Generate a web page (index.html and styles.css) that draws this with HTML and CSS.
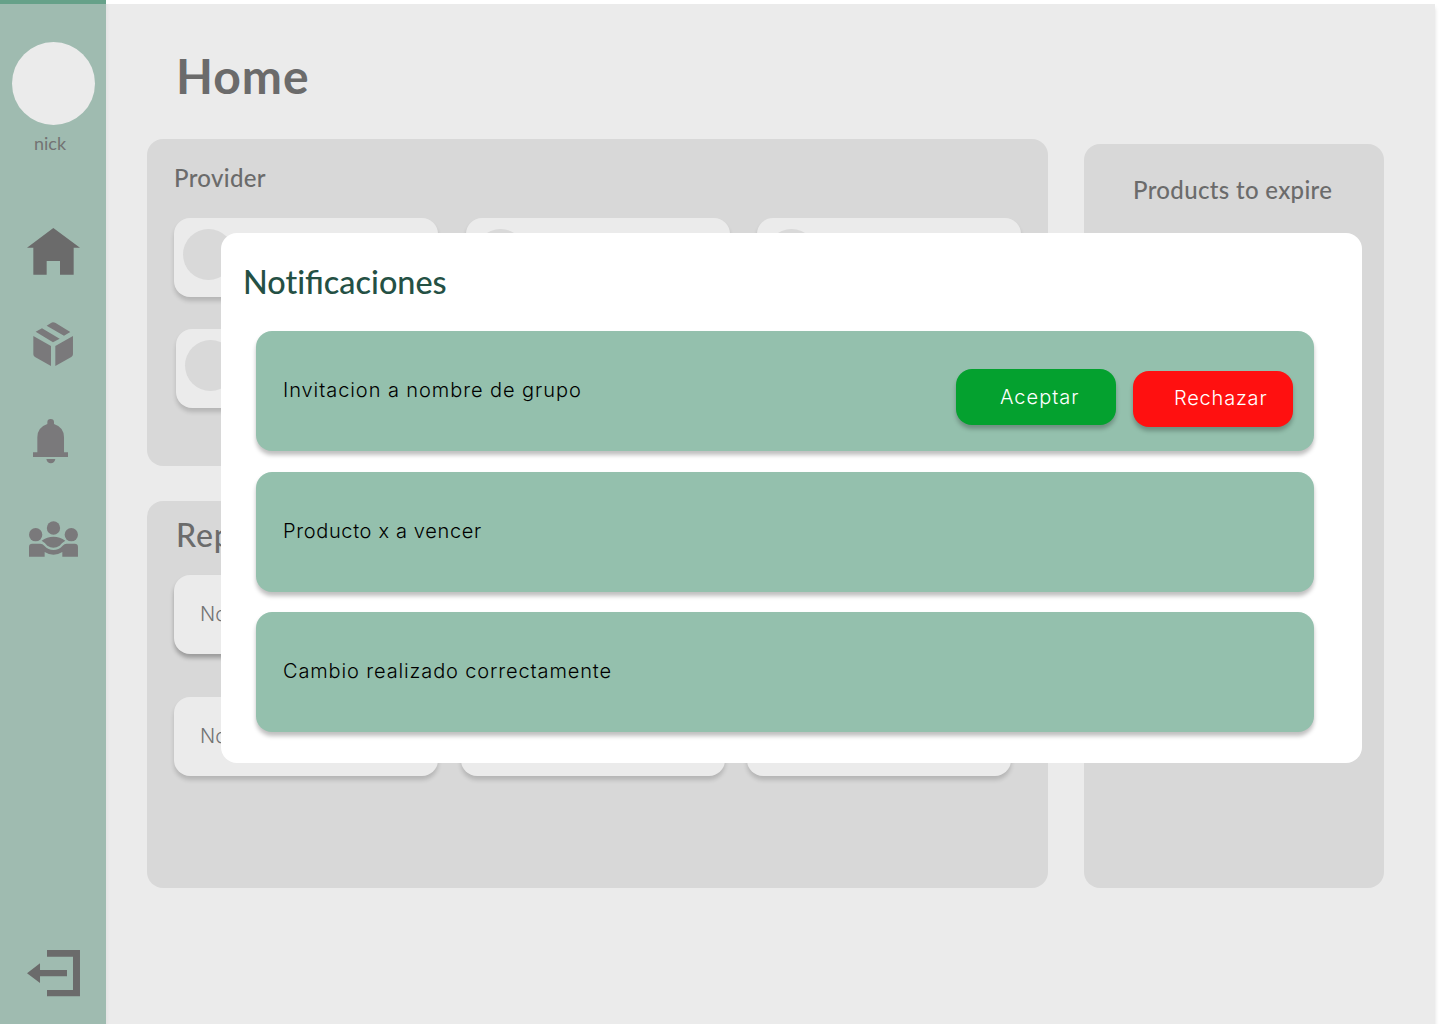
FILE: index.html
```html
<!DOCTYPE html>
<html lang="es">
<head>
<meta charset="utf-8">
<title>Home</title>
<link rel="stylesheet" href="styles.css">
</head>
<body>
<aside class="sidebar">
  <div class="avatar"></div>
  <span class="nick">nick</span>
  <nav class="nav">
    <svg class="icon home" viewBox="81 54 159 140"><path d="M160 54L240 113H221V194H180V153H140V194H100V113H81Z"/></svg>
    <svg class="icon box" viewBox="100 335 121 133"><path d="M160 336q-3 0-6 2L141 346L193 376L212 365L168 338q-4-2-8-2ZM127 354L108 364L160 396L180 385ZM101 377L154 407V467L106 440Q101 437 101 432ZM220 377L167 407V467L215 440Q220 437 220 432Z"/></svg>
    <svg class="icon bell" viewBox="98 57 107 134"><path d="M141 72V67a10 10 0 0 1 20 0V72Q191 82 191 112V157H204V171H98V157H111V112Q111 82 141 72ZM138 177H165Q162 190 151.500 190T138 177Z"/></svg>
    <svg class="icon people" viewBox="87 361 148 108"><circle cx="107" cy="402" r="20"/><circle cx="160.500" cy="382" r="20"/><circle cx="214" cy="402" r="20"/><path d="M125 420Q141 408 160.500 408T196 420Q187 425 179 435Q160 447 142 435Q134 425 125 420ZM87 468V439Q87 429 97 429H121Q128 429 133 435Q145 448 160.500 448T188 435Q193 429 200 429H224Q234 429 234 439V468H187V454Q175 462 160.500 462T134 454V468Z"/></svg>
  </nav>
  <svg class="icon exit" viewBox="81 60 159 139"><path d="M141 60H240V199H141V180H219V80H141ZM81 129.500L120 100V120H201V139H120V159Z"/></svg>
</aside>
<main class="page">
  <h1 class="title">Home</h1>
  <div class="columns">
    <div class="left">
      <section class="panel provider">
        <h2 class="heading">Provider</h2>
        <div class="row"><div class="card"><i class="dot"></i></div><div class="card"><i class="dot"></i></div><div class="card"><i class="dot"></i></div></div>
        <div class="row second"><div class="card"><i class="dot"></i></div></div>
      </section>
      <section class="panel reports">
        <h2 class="heading large">Reports</h2>
        <div class="row"><div class="card strong">Nombre</div></div>
        <div class="row lower"><div class="card">Nombre</div><div class="card"></div><div class="card"></div></div>
      </section>
    </div>
    <section class="panel expire"><h2 class="heading">Products to expire</h2></section>
  </div>
</main>
<section class="modal">
  <h2 class="modal-title"><span class="plain">Not</span>ificaciones</h2>
  <div class="notices">
    <article class="notice"><p class="invite">Invitacion a nombre de grupo</p><div class="actions"><button class="btn accept">Aceptar</button><button class="btn reject">Rechazar</button></div></article>
    <article class="notice"><p class="expiring">Producto x a vencer</p></article>
    <article class="notice"><p class="saved">Cambio realizado correctamente</p></article>
  </div>
</section>
</body>
</html>
```
FILE: styles.css
```css
* { box-sizing: border-box; }
body { margin: 0; width: 1440px; height: 1024px; overflow: hidden; position: relative; display: flex; background: #fff; font-family: Lato, "Noto Sans", sans-serif; color: #6b6b6b; }
h1, h2, p { margin: 0; }
.sidebar { width: 106px; height: 1024px; border-top: 4px solid #66a189; background: #9fbbb0; display: flex; flex-direction: column; align-items: center; padding-top: 38px; flex: none; position: relative; z-index: 1; }
.avatar { width: 83px; height: 83px; border-radius: 50%; background: #ebebeb; }
.nick { font-size: 18px; line-height: 24px; margin: 6px 6px 1px 0; color: #737373; }
.nav { display: flex; flex-direction: column; align-items: center; margin-top: 72px; }
.icon { display: block; fill: #7a797b; }
.home { width: 53px; height: 46.7px; fill: #6b6b6b; }
.box { width: 40.3px; height: 44.3px; margin: 47px 0 0 1px; }
.bell { width: 35.7px; height: 44.7px; margin: 53px 5px 0 0; }
.people { width: 49.3px; height: 36px; margin: 57px 0 0 1.500px; }
.exit { width: 53px; height: 46.3px; margin: auto 0 27.500px; fill: #6b6b6b; }
.page { width: 1329px; height: 1020px; margin-top: 4px; padding: 38px 0 0 41px; background: linear-gradient(90deg, #e3e3e3, #ebebeb 4px); box-shadow: 0 4px 4px rgba(0,0,0,.14); }
.title { padding-left: 29px; font-size: 48px; line-height: 68px; height: 93px; font-weight: 700; letter-spacing: 1px; }
.columns { display: flex; gap: 36px; margin-top: 4px; }
.left { width: 901px; display: flex; flex-direction: column; gap: 35px; }
.panel { background: #d8d8d8; border-radius: 16px; }
.provider { height: 327px; padding: 23px 27px; }
.heading { font-size: 24px; line-height: 32px; font-weight: 500; letter-spacing: .34px; }
.row { display: flex; gap: 27.500px; margin-top: 24px; }
.second { margin: 32px 0 0 2px; }
.card { width: 264px; height: 79px; flex: none; border-radius: 16px; background: #ebebeb; box-shadow: 0 4px 4px rgba(0,0,0,.16); padding: 11px 9px; font-size: 20px; }
.dot { display: block; width: 51px; height: 51px; border-radius: 50%; background: #d9d9d9; }
.reports { height: 387px; padding: 12px 27px; }
.large { font-size: 32px; line-height: 44px; padding-left: 2px; letter-spacing: .8px; }
.reports .row { margin-top: 18px; gap: 22.500px; }
.reports .lower { margin-top: 43px; }
.reports .card { padding: 27px 26px; line-height: 25px; font-family: Inter, sans-serif; font-weight: 300; color: #737373; }
.reports .strong { box-shadow: 0 4px 4px rgba(0,0,0,.28); }
.expire { width: 300px; height: 744px; margin-top: 5px; padding: 30px 0 0 49px; }
.modal { position: absolute; left: 221px; top: 233px; width: 1141px; height: 530px; border-radius: 16px; background: #fff; padding: 27px 48px 0 35px; }
.modal-title { margin-left: -13px; font-size: 32.4px; line-height: 44px; font-weight: 500; color: #245044; }
.plain { font-variant-ligatures: none; }
.notices { margin-top: 27px; display: grid; gap: 20.500px; }
.notice { height: 120px; border-radius: 16px; background: #94c0ad; box-shadow: 0 4px 4px rgba(0,0,0,.25); padding: 0 21px 2px 27px; display: flex; justify-content: space-between; align-items: center; font: 300 20px/24px Inter, sans-serif; color: #000; }
.invite { letter-spacing: .93px; }
.expiring { letter-spacing: .65px; }
.saved { letter-spacing: .87px; }
.actions { display: flex; gap: 17px; align-items: flex-start; margin-top: 16px; }
.btn { width: 160px; height: 56px; border: 0; border-radius: 16px; color: #fff; box-shadow: 0 4px 4px rgba(0,0,0,.25); font: 300 20px/24px Inter, sans-serif; text-align: left; }
.accept { background: #04a12f; padding: 0 0 0 44px; letter-spacing: 1px; }
.reject { background: #ff1010; padding: 0 0 2px 41px; margin-top: 2px; letter-spacing: .8px; }
```
